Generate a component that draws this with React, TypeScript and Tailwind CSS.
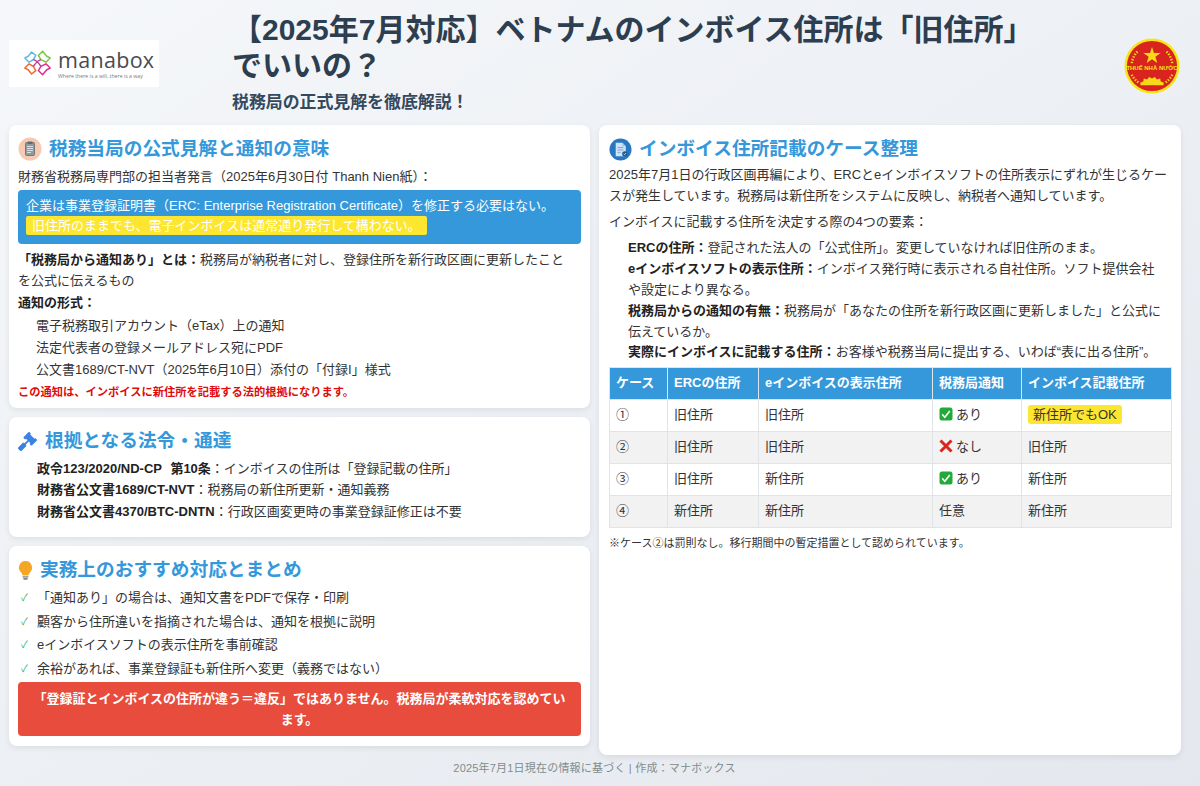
import React from "react";
import { FaGavel } from "react-icons/fa";

function Logo() {
  return (
    <div className="w-[150px] h-[47px] mt-[1px] bg-white flex items-center pl-[15px] gap-[7px] shrink-0">
      <svg width="27" height="28" viewBox="0 0 32 30" fill="none" strokeWidth="1.7" strokeLinejoin="round">
        <path d="M9 2 L14 6 L11 11 L6 14 L1 9 L5 7 Z" stroke="#5bb8e8" />
        <path d="M22 1 L27 7 L31 9 L26 14 L20 11 L17 6 Z" stroke="#7cc242" />
        <path d="M6 16 L11 19 L14 24 L9 28 L5 23 L1 21 Z" stroke="#f0662b" />
        <path d="M20 19 L26 16 L31 21 L27 23 L22 29 L17 24 Z" stroke="#e0288f" />
        <path d="M11 11 C15 12 17 14 20 19 M20 11 C16 12 14 15 11 19" stroke="#c23aa0" />
      </svg>
      <div className="flex flex-col gap-[1px]">
        <span className="text-[21.5px] leading-[24px] tracking-[0.3px] font-medium text-[#4a4a4f] font-['Open_Sans',sans-serif]">manabox</span>
        <span className="text-[5.2px] leading-[6px] text-[#777] font-['Open_Sans',sans-serif]">Where there is a will, there is a way</span>
      </div>
    </div>
  );
}

function Emblem() {
  return (
    <svg width="56" height="56" viewBox="0 0 58 58" className="shrink-0">
      <circle cx="29" cy="29" r="28.5" fill="#f7e514" />
      <circle cx="29" cy="29" r="26" fill="#d8231f" />
      <polygon points="29,9 31,15.5 38,15.5 32.5,19.5 34.5,26 29,22 23.5,26 25.5,19.5 20,15.5 27,15.5" fill="#f7d917" />
      <path d="M8 26 A 22 22 0 0 1 15 13" fill="none" stroke="#f7d917" strokeWidth="2.5" strokeDasharray="1.5 1.5" />
      <path d="M50 26 A 22 22 0 0 0 43 13" fill="none" stroke="#f7d917" strokeWidth="2.5" strokeDasharray="1.5 1.5" />
      <path d="M8 38 A 22 22 0 0 0 15 46" fill="none" stroke="#f7d917" strokeWidth="2.5" strokeDasharray="1.5 1.5" />
      <path d="M50 38 A 22 22 0 0 1 43 46" fill="none" stroke="#f7d917" strokeWidth="2.5" strokeDasharray="1.5 1.5" />
      <path d="M17 49 L17 46 L20 45 L20.5 42 L24 43 L26 40.5 L29 42 L32 40.5 L34 43 L37.5 42 L38 45 L41 46 L41 49 Z" fill="#f7d917" />
      <path d="M21 52 A 10 7 0 0 1 37 52 A 26 26 0 0 1 21 52 Z" fill="#d8231f" />
      <text x="29" y="33.5" textAnchor="middle" fontSize="6.2" fontWeight="700" fill="#f7e514" fontFamily="'Liberation Sans',sans-serif">THUẾ NHÀ NƯỚC</text>
    </svg>
  );
}

function DocIcon() {
  return (
    <svg width="24" height="24" viewBox="0 0 24 24" className="shrink-0">
      <circle cx="12" cy="12" r="11.5" fill="#f6c9b0" />
      <rect x="7.5" y="5.5" width="9" height="13" rx="1" fill="#8d99a3" stroke="#5f6b75" strokeWidth="0.8" />
      <rect x="9.5" y="4.5" width="5" height="2.5" rx="0.6" fill="#5f6b75" />
      <path d="M9 9.5h6M9 11.5h6M9 13.5h6M9 15.5h4" stroke="#eef1f3" strokeWidth="0.8" />
    </svg>
  );
}

function InvoiceIcon() {
  return (
    <svg width="23" height="23" viewBox="0 0 24 24" className="shrink-0">
      <circle cx="12" cy="12" r="11.5" fill="#2877c2" />
      <path d="M7 5h7l3.5 3.5V19H7z" fill="#cfe3f5" />
      <path d="M14 5v3.5h3.5" fill="#9cc3e6" />
      <path d="M9 10h6M9 12.5h6M9 15h3" stroke="#6e9ac4" strokeWidth="0.9" />
      <circle cx="16.5" cy="16.5" r="2.8" fill="#1c5a96" />
      <path d="M15.3 16.5l.9.9 1.6-1.7" stroke="#fff" strokeWidth="0.8" fill="none" />
    </svg>
  );
}

function BulbIcon() {
  return (
    <svg width="15" height="21" viewBox="0 0 16 22" className="shrink-0">
      <path d="M8 1a7 7 0 0 0-4.6 12.3c.9.8 1.3 1.6 1.4 2.7h6.4c.1-1.1.5-1.9 1.4-2.7A7 7 0 0 0 8 1z" fill="#f5a623" />
      <rect x="4.8" y="16.6" width="6.4" height="2" rx="0.6" fill="#a8a29a" />
      <rect x="5.6" y="19" width="4.8" height="1.8" rx="0.8" fill="#8a847c" />
    </svg>
  );
}

function GreenCheck() {
  return (
    <svg width="14" height="14" viewBox="0 0 14 14" className="inline-block align-[-2px] mr-[3px]">
      <rect x="0.5" y="0.5" width="13" height="13" rx="2.5" fill="#22a93a" />
      <path d="M3.2 7.4l2.6 2.8 5-6.2" stroke="#fff" strokeWidth="1.6" fill="none" />
    </svg>
  );
}

function RedCross() {
  return (
    <svg width="14" height="14" viewBox="0 0 14 14" className="inline-block align-[-2px] mr-[3px]">
      <path d="M1.5 1.5L12.5 12.5M12.5 1.5L1.5 12.5" stroke="#d9251c" strokeWidth="3" />
    </svg>
  );
}

function Card({ children, className = "" }: { children: React.ReactNode; className?: string }) {
  return (
    <section className={`bg-white rounded-[8px] shadow-[0_2px_6px_rgba(0,0,0,0.08)] ${className}`}>
      {children}
    </section>
  );
}

function Heading({ icon, children, gap = "gap-[7px]" }: { icon: React.ReactNode; children: React.ReactNode; gap?: string }) {
  return (
    <h2 className={`flex items-center ${gap} text-[#3498db] text-[18.7px] leading-[28px] font-bold`}>
      {icon}
      <span>{children}</span>
    </h2>
  );
}

const rows = [
  ["①", "旧住所", "旧住所", "yes", "mark"],
  ["②", "旧住所", "旧住所", "no", "旧住所"],
  ["③", "旧住所", "新住所", "yes", "新住所"],
  ["④", "新住所", "新住所", "any", "新住所"],
];

const th = "bg-[#3498db] text-white font-bold text-left border border-[#dfe4e8] px-[6px] h-[32px]";
const td = "border border-[#dfe4e8] px-[6px] h-[32px]";

export default function App() {
  return (
    <div className="w-[1200px] h-[786px] overflow-hidden flex flex-col px-[9px] bg-gradient-to-br from-[#f5f7fa] to-[#e4e8ee] text-[#333333] text-[13px] leading-[20.8px] font-['Liberation_Sans','Noto_Sans_CJK_JP',sans-serif]">
      <header className="h-[125px] flex items-center shrink-0">
        <Logo />
        <div className="w-[900px] ml-[73px]">
          <h1 className="text-[30px] leading-[36px] font-bold text-[#2c3e50] pt-[1px]">
            【2025年7月対応】ベトナムのインボイス住所は「旧住所」<br />でいいの？
          </h1>
          <p className="text-[16.9px] leading-[24px] font-bold text-[#34495e] mt-[7px]">税務局の正式見解を徹底解説！</p>
        </div>
        <div className="ml-auto mr-[11px] pt-[6px]"><Emblem /></div>
      </header>

      <main className="flex gap-[9px] h-[630px] shrink-0">
        <div className="w-[581px] flex flex-col gap-[9px]">
          <Card className="h-[283px] p-[9px] pt-[10px]">
            <Heading icon={<DocIcon />}>税務当局の公式見解と通知の意味</Heading>
            <p className="mt-[4px]">財務省税務局専門部の担当者発言（2025年6月30日付 Thanh Nien紙）：</p>
            <div className="mt-[2px] h-[54px] bg-[#3498db] text-white rounded-[4px] px-[8px] pt-[6px] leading-[20px]">
              <div>企業は事業登録証明書（ERC: Enterprise Registration Certificate）を修正する必要はない。</div>
              <div><span className="inline-block bg-[#fde62f] text-white rounded-[2px] px-[6px] leading-[19px]">旧住所のままでも、電子インボイスは通常通り発行して構わない。</span></div>
            </div>
            <p className="mt-[6px]"><b className="text-[#222]">「税務局から通知あり」とは：</b>税務局が納税者に対し、登録住所を新行政区画に更新したこと<br />を公式に伝えるもの</p>
            <p className="mt-[2px] font-bold text-[#222]">通知の形式：</p>
            <ul className="pl-[18px] mt-[2px] flex flex-col gap-[1px]">
              <li>電子税務取引アカウント（eTax）上の通知</li>
              <li>法定代表者の登録メールアドレス宛にPDF</li>
              <li>公文書1689/CT-NVT（2025年6月10日）添付の「付録I」様式</li>
            </ul>
            <p className="text-[#e00b0b] font-bold text-[11.25px] leading-[20px] mt-[1px]">この通知は、インボイスに新住所を記載する法的根拠になります。</p>
          </Card>

          <Card className="h-[120px] p-[9px] pt-[10px]">
            <Heading gap="gap-[8px]" icon={<FaGavel className="text-[#3b82e6] text-[19px] shrink-0" />}>根拠となる法令・通達</Heading>
            <ul className="pl-[19px] mt-[4px] flex flex-col gap-[0.5px]">
              <li><b className="text-[#222]">政令123/2020/ND-CP <span className="ml-[5px]">第10条</span></b>：インボイスの住所は「登録記載の住所」</li>
              <li><b className="text-[#222]">財務省公文書1689/CT-NVT</b>：税務局の新住所更新・通知義務</li>
              <li><b className="text-[#222]">財務省公文書4370/BTC-DNTN</b>：行政区画変更時の事業登録証修正は不要</li>
            </ul>
          </Card>

          <Card className="h-[200px] p-[9px] pt-[10px]">
            <Heading icon={<BulbIcon />}>実務上のおすすめ対応とまとめ</Heading>
            <ul className="mt-[2px] leading-[23.7px]">
              {["「通知あり」の場合は、通知文書をPDFで保存・印刷", "顧客から住所違いを指摘された場合は、通知を根拠に説明", "eインボイスソフトの表示住所を事前確認", "余裕があれば、事業登録証も新住所へ変更（義務ではない）"].map((t) => (
                <li key={t} className="flex">
                  <span className="w-[19px] pl-[3px] text-[#27ae60] text-[10px]">✓</span>
                  <span>{t}</span>
                </li>
              ))}
            </ul>
            <div className="bg-[#e74c3c] text-white font-bold text-center rounded-[4px] mt-[1px] h-[54px] px-[8px] pt-[6px] leading-[21px]">
              「登録証とインボイスの住所が違う＝違反」ではありません。税務局が柔軟対応を認めてい<br />ます。
            </div>
          </Card>
        </div>

        <Card className="w-[582px] h-[630px] p-[10px] pt-[10px]">
          <Heading icon={<InvoiceIcon />}>インボイス住所記載のケース整理</Heading>
          <p className="mt-[2px]">2025年7月1日の行政区画再編により、ERCとeインボイスソフトの住所表示にずれが生じるケースが発生しています。税務局は新住所をシステムに反映し、納税者へ通知しています。</p>
          <p className="mt-[5px]">インボイスに記載する住所を決定する際の4つの要素：</p>
          <ul className="pl-[19px] mt-[6px]">
            <li><b className="text-[#222]">ERCの住所：</b>登記された法人の「公式住所」。変更していなければ旧住所のまま。</li>
            <li><b className="text-[#222]">eインボイスソフトの表示住所：</b>インボイス発行時に表示される自社住所。ソフト提供会社<br />や設定により異なる。</li>
            <li><b className="text-[#222]">税務局からの通知の有無：</b>税務局が「あなたの住所を新行政区画に更新しました」と公式に<br />伝えているか。</li>
            <li><b className="text-[#222]">実際にインボイスに記載する住所：</b>お客様や税務当局に提出する、いわば“表に出る住所”。</li>
          </ul>
          <table className="mt-[4px] w-[562px] table-fixed border-collapse">
            <colgroup>
              <col className="w-[58px]" /><col className="w-[91px]" /><col className="w-[174px]" /><col className="w-[89px]" /><col className="w-[150px]" />
            </colgroup>
            <thead>
              <tr>
                {["ケース", "ERCの住所", "eインボイスの表示住所", "税務局通知", "インボイス記載住所"].map((h) => (
                  <th key={h} className={th}>{h}</th>
                ))}
              </tr>
            </thead>
            <tbody>
              {rows.map((r, i) => (
                <tr key={r[0]} className={i % 2 === 1 ? "bg-[#f2f2f2]" : "bg-white"}>
                  <td className={td}>{r[0]}</td>
                  <td className={td}>{r[1]}</td>
                  <td className={td}>{r[2]}</td>
                  <td className={td}>
                    {r[3] === "yes" && <><GreenCheck />あり</>}
                    {r[3] === "no" && <><RedCross />なし</>}
                    {r[3] === "any" && "任意"}
                  </td>
                  <td className={td}>
                    {r[4] === "mark" ? <span className="inline-block bg-[#fde62f] rounded-[3px] px-[5px] leading-[19px]">新住所でもOK</span> : r[4]}
                  </td>
                </tr>
              ))}
            </tbody>
          </table>
          <p className="mt-[5px] text-[11px] leading-[20px]">※ケース②は罰則なし。移行期間中の暫定措置として認められています。</p>
        </Card>
      </main>

      <footer className="flex-1 flex items-center justify-center text-[11px] text-[#7f8c8d] tracking-[0.2px] pb-[5px] pr-[11px]">
        2025年7月1日現在の情報に基づく | 作成：マナボックス
      </footer>
    </div>
  );
}
